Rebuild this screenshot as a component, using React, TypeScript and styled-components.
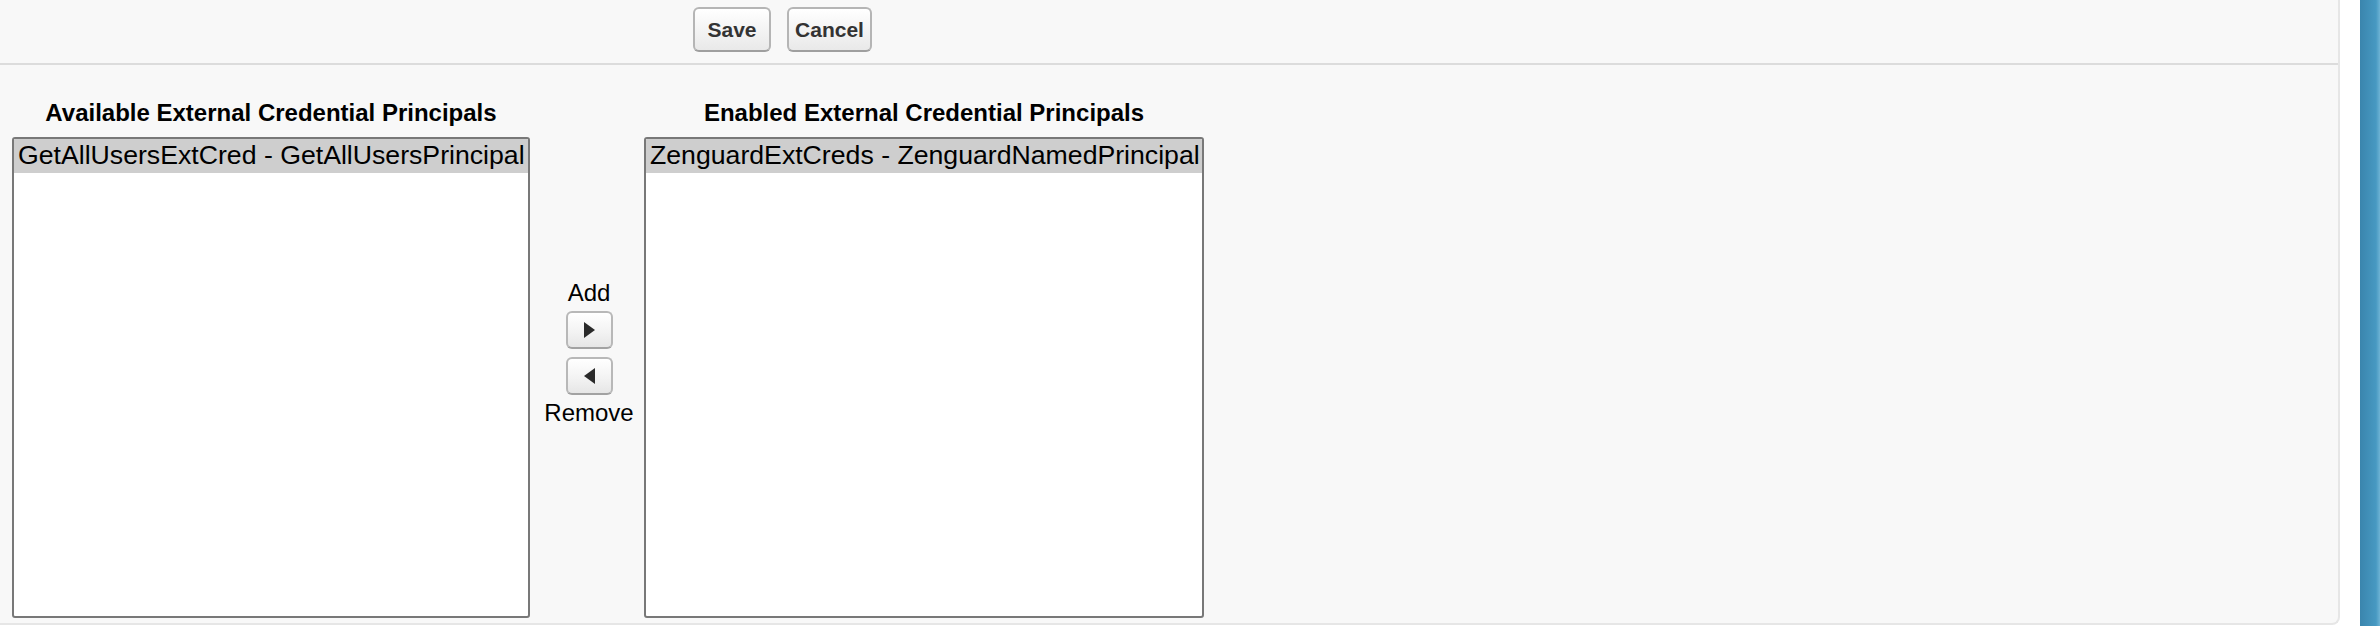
import React from 'react';
import styled, { createGlobalStyle } from 'styled-components';

const GlobalStyle = createGlobalStyle`
  html, body {
    margin: 0;
    padding: 0;
    background: #ffffff;
  }

  body {
    font-family: 'Liberation Sans', Arial, sans-serif;
    color: #000;
  }
`;

const Page = styled.div`
  display: flex;
  height: 626px;
  width: 2380px;
  overflow: hidden;
`;

const Panel = styled.div`
  flex: 0 0 2340px;
  box-sizing: border-box;
  height: 625px;
  background: #f8f8f8;
  border-right: 2px solid #e6e6e6;
  border-bottom: 2px solid #e6e6e6;
  border-bottom-right-radius: 8px;
`;

const Gutter = styled.div`
  flex: 0 0 20px;
  background: #ffffff;
`;

const SideStrip = styled.div`
  flex: 0 0 20px;
  background: linear-gradient(to right, #3a85ad 0%, #4799c2 80%, #6eb3d4 100%);
`;

const ButtonBar = styled.div`
  display: flex;
  align-items: flex-start;
  gap: 16px;
  height: 65px;
  box-sizing: border-box;
  padding: 7px 0 0 693px;
  border-bottom: 2px solid #dcdcdc;
`;

const Button = styled.button<{ $width: number }>`
  width: ${(p) => p.$width}px;
  height: 45px;
  box-sizing: border-box;
  padding: 0;
  border: 2px solid #b5b5b5;
  border-bottom-color: #9f9f9f;
  border-radius: 6px;
  background: linear-gradient(to bottom, #ffffff 0%, #f4f4f4 50%, #e9e9e9 100%);
  font-family: 'Liberation Sans', Arial, sans-serif;
  font-size: 21px;
  font-weight: bold;
  color: #333;
  cursor: pointer;
`;

const Dueling = styled.div`
  display: grid;
  grid-template-columns: 518px 114px 560px;
  grid-template-rows: 28px 481px;
  row-gap: 10px;
  padding: 34px 0 0 12px;
`;

const Title = styled.div`
  font-size: 24px;
  line-height: 28px;
  font-weight: bold;
  text-align: center;
  white-space: nowrap;
`;

const ListBox = styled.div`
  box-sizing: border-box;
  height: 481px;
  background: #ffffff;
  border: 2px solid #787878;
  border-radius: 3px;
  overflow: hidden;
`;

const Option = styled.div<{ $selected?: boolean }>`
  height: 34px;
  line-height: 33px;
  padding: 0 4px;
  font-size: 26.67px;
  white-space: nowrap;
  color: #000;
  background: ${(p) => (p.$selected ? '#cecece' : 'transparent')};
`;

const Mover = styled.div`
  display: flex;
  flex-direction: column;
  align-items: center;
  padding: 142px 0 0 4px;
`;

const MoverLabel = styled.div<{ $gap: number }>`
  font-size: 24px;
  line-height: 28px;
  margin-top: ${(p) => p.$gap}px;
`;

const ArrowButton = styled.button<{ $top: number }>`
  width: 47px;
  height: 38px;
  box-sizing: border-box;
  padding: 0;
  margin-top: ${(p) => p.$top}px;
  display: flex;
  align-items: center;
  justify-content: center;
  border: 2px solid #b8b8b8;
  border-bottom-color: #a2a2a2;
  border-radius: 6px;
  background: linear-gradient(to bottom, #ffffff 0%, #f3f3f3 55%, #e6e6e6 100%);
  cursor: pointer;
`;

const Triangle = ({ dir }: { dir: 'right' | 'left' }) => (
  <svg width="11" height="16" viewBox="0 0 11 16">
    <polygon
      points={dir === 'right' ? '0,0 11,8 0,16' : '11,0 0,8 11,16'}
      fill="#2a2a2a"
    />
  </svg>
);

const available = ['GetAllUsersExtCred - GetAllUsersPrincipal'];
const enabled = ['ZenguardExtCreds - ZenguardNamedPrincipal'];

export default function App() {
  return (
    <>
      <GlobalStyle />
      <Page>
        <Panel>
          <ButtonBar>
            <Button $width={78}>Save</Button>
            <Button $width={85}>Cancel</Button>
          </ButtonBar>
          <Dueling>
            <Title>Available External Credential Principals</Title>
            <div />
            <Title>Enabled External Credential Principals</Title>

            <ListBox>
              {available.map((item, i) => (
                <Option key={item} $selected={i === 0}>
                  {item}
                </Option>
              ))}
            </ListBox>
            <Mover>
              <MoverLabel $gap={0}>Add</MoverLabel>
              <ArrowButton $top={4} title="Add">
                <Triangle dir="right" />
              </ArrowButton>
              <ArrowButton $top={8} title="Remove">
                <Triangle dir="left" />
              </ArrowButton>
              <MoverLabel $gap={4}>Remove</MoverLabel>
            </Mover>
            <ListBox>
              {enabled.map((item, i) => (
                <Option key={item} $selected={i === 0}>
                  {item}
                </Option>
              ))}
            </ListBox>
          </Dueling>
        </Panel>
        <Gutter />
        <SideStrip />
      </Page>
    </>
  );
}
